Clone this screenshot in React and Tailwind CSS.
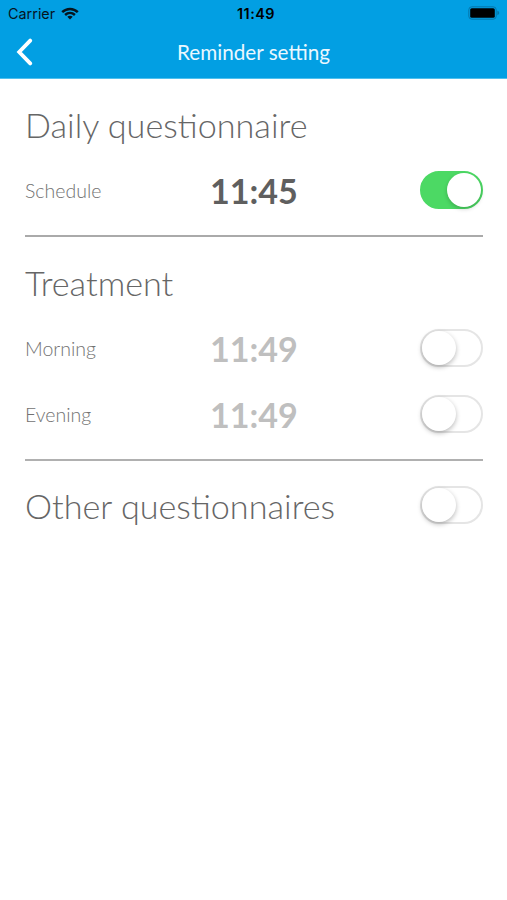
import React, { useState } from 'react';

const Toggle = ({ on, onChange }) => (
  <button
    className={`w-[63px] h-[38px] shrink-0 rounded-full border-2 flex items-center ${on ? "bg-[#4cd964] border-[#4cd964] justify-end" : "bg-white border-[#e5e5e5] justify-start"}`}
    onClick={onChange}
  >
    <span className={`block w-[34px] h-[34px] rounded-full bg-white ${on ? "shadow-[0_2px_4px_rgba(0,0,0,0.2)]" : "shadow-[0_2px_5px_rgba(0,0,0,0.28)]"}`} />
  </button>
);

const TimeRow = ({ label, time, on, onChange }) => (
  <div className="h-[66px] flex items-center">
    <span className="w-[185px] pt-[2px] text-[19.5px] leading-6 font-light text-[#727272]">{label}</span>
    <span className={`flex-1 pt-[2px] text-[34.1px] leading-10 font-bold ${on ? "text-[#5f5f5f]" : "text-[#bfbfbf]"}`}>{time}</span>
    <Toggle on={on} onChange={onChange} />
  </div>
);

const StatusBar = () => (
  <div className="h-[27px] grid grid-cols-3 items-center pl-2 pr-[7px] font-['Inter',sans-serif] text-[#06151f]">
    <div className="flex items-center gap-[6px]">
      <span className="text-[14.4px] leading-5">Carrier</span>
      <svg className="w-[18px] h-[13px]" viewBox="0 0 18 13" fill="none" stroke="currentColor" strokeWidth="2.5">
        <path d="M1.2 5.1C5.7.8 12.3.8 16.8 5.1" />
        <path d="M4.1 8C7 5.4 11 5.4 13.9 8" />
        <path d="M9 12.6 6.3 9.8C7.8 8.5 10.2 8.5 11.7 9.8Z" fill="currentColor" stroke="none" />
      </svg>
    </div>
    <span className="pl-[4px] text-center text-[14.4px] leading-5 font-semibold tracking-[0.5px] text-black">11:49</span>
    <svg className="w-[32px] h-[14px] -mt-[2px] justify-self-end" viewBox="0 0 32 14">
      <rect x="0.8" y="0.8" width="27.4" height="12.4" rx="3" fill="none" stroke="#0577ab" strokeWidth="1" />
      <rect x="2.2" y="2.2" width="24.6" height="9.6" rx="1.6" fill="#000" />
      <path d="M29.3 4.8C31.8 5.4 31.8 8.6 29.3 9.2Z" fill="#0577ab" />
    </svg>
  </div>
);

const App = () => {
  const [daily, setDaily] = useState(true);
  const [morning, setMorning] = useState(false);
  const [evening, setEvening] = useState(false);
  const [other, setOther] = useState(false);

  return (
    <div className="min-h-screen bg-white font-['Lato',sans-serif]">
      {/* header */}
      <header className="h-[79px] bg-[#029fe3] border-b border-[#4fc0ee]">
        <StatusBar />
        <div className="h-[50px] grid grid-cols-3 items-center">
          <button className="ml-4">
            <svg className="w-[17px] h-[28px]" viewBox="0 0 17 28" fill="none" stroke="#fff" strokeWidth="3.8" strokeLinecap="round" strokeLinejoin="miter">
              <path d="M14.2 2.6 3.2 14 14.2 25.4" />
            </svg>
          </button>
          <h1 className="pb-px text-center whitespace-nowrap text-[20.7px] leading-6 text-[#eaf8ff]">Reminder setting</h1>
        </div>
      </header>

      <main className="pl-[25px] pr-[24px]">
        {/* daily */}
        <section className="h-[158px] pt-[24px] border-b-2 border-[#aaaaaa]">
          <h2 className="text-[34.2px] leading-[44px] font-light text-[#666666]">Daily questionnaire</h2>
          <div className="mt-[10px]">
            <TimeRow label="Schedule" time="11:45" on={daily} onChange={() => setDaily(!daily)} />
          </div>
        </section>

        {/* treatment */}
        <section className="h-[224px] pt-[24px] border-b-2 border-[#b0b0b0]">
          <h2 className="text-[34.2px] leading-[44px] font-light text-[#666666]">Treatment</h2>
          <div className="mt-[10px]">
            <TimeRow label="Morning" time="11:49" on={morning} onChange={() => setMorning(!morning)} />
            <TimeRow label="Evening" time="11:49" on={evening} onChange={() => setEvening(!evening)} />
          </div>
        </section>

        {/* other */}
        <section className="h-[88px] flex items-center justify-between">
          <h2 className="pt-[2px] text-[34.2px] leading-[44px] font-light text-[#666666]">Other questionnaires</h2>
          <Toggle on={other} onChange={() => setOther(!other)} />
        </section>
      </main>
    </div>
  );
};

export default App;
